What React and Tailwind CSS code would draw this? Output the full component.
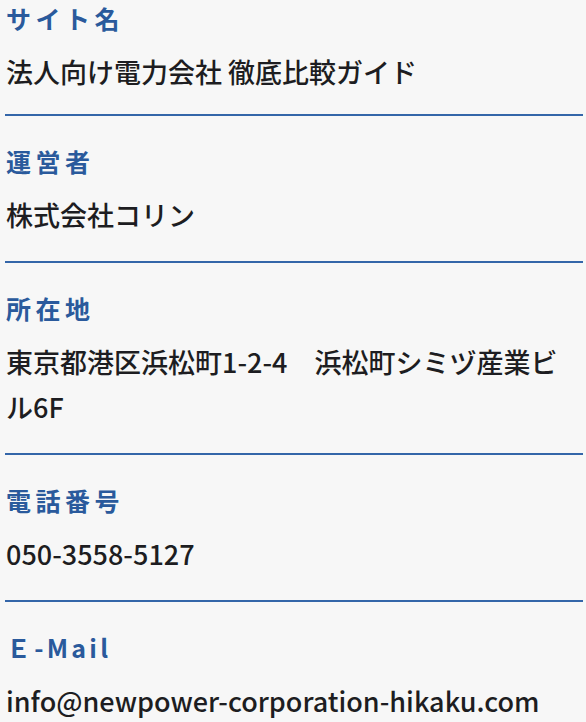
import React from "react";

const items = [
  { label: "サイト名", value: "法人向け電力会社 徹底比較ガイド" },
  { label: "運営者", value: "株式会社コリン" },
  { label: "所在地", value: "東京都港区浜松町1-2-4　浜松町シミヅ産業ビル6F" },
  { label: "電話番号", value: "050-3558-5127" },
  { label: "Ｅ-Mail", value: "info@newpower-corporation-hikaku.com", last: true },
];

export default function App() {
  return (
    <div
      className="min-h-[722px] w-[586px] bg-[#f7f7f7] overflow-hidden"
      style={{ fontFamily: '"Noto Sans CJK JP", "Noto Sans", sans-serif' }}
    >
      <dl className="ml-[5px] mr-[3px]">
        {items.map((it, i) => (
          <div
            key={i}
            className={
              (i === 0 ? "pt-0 pb-[20px] " : "pt-[27px] pb-[24px] ") +
              (it.last ? "" : "border-b-2 border-[#3466a9]")
            }
          >
            <dt
              className={
                "pl-[1px] text-[25px] leading-[36px] font-bold text-[#2a5a9c] " +
                (it.last ? "tracking-[0.13em]" : "tracking-[0.18em]")
              }
            >
              {it.label}
            </dt>
            <dd className="mt-[13px] pl-[1px] text-[27px] leading-[45px] font-medium text-[#1d1d21]">
              {it.value}
            </dd>
          </div>
        ))}
      </dl>
    </div>
  );
}
